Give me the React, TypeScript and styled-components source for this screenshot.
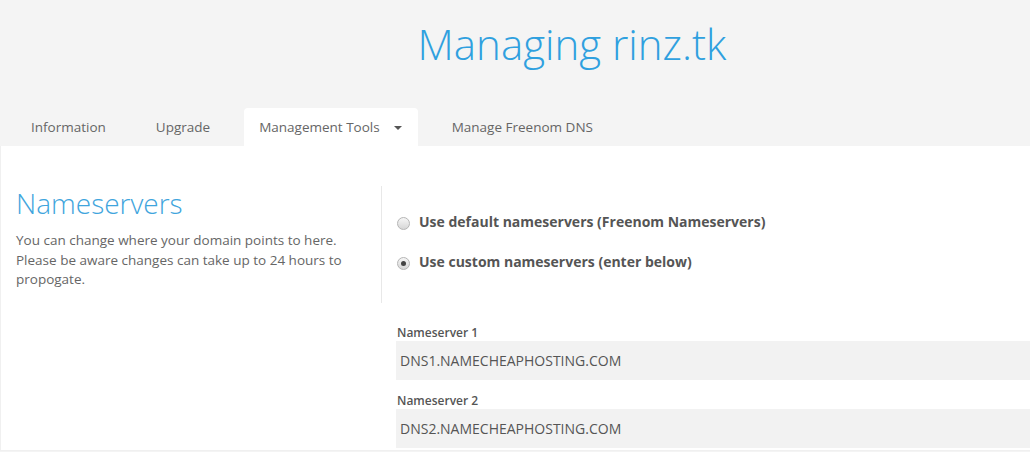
import React from "react";
import styled, { createGlobalStyle } from "styled-components";

const Global = createGlobalStyle`
  html, body { margin: 0; padding: 0; background: #f4f4f4; }
  body { font-family: "Open Sans", "Noto Sans", sans-serif; color: #666; width: 1030px; height: 452px; overflow: hidden; }
  * { box-sizing: border-box; }
`;

const Header = styled.header`
  height: 108px;
  display: flex;
  justify-content: center;
  padding-left: 114px;
`;

const Title = styled.h1`
  margin: 0;
  padding-top: 19px;
  font-weight: 300;
  font-size: 42px;
  line-height: 50px;
  color: #2fa0df;
`;

const Tabs = styled.nav`
  display: flex;
  height: 38px;
  padding-left: 15px;
  gap: 18px;
`;

const Tab = styled.div<{ $active?: boolean }>`
  display: flex;
  align-items: center;
  gap: 14px;
  height: 38px;
  font-size: 13.5px;
  color: #666;
  background: ${(p) => (p.$active ? "#fff" : "transparent")};
  border-radius: 4px 4px 0 0;
  padding: 0 16px 0 ${(p) => (p.$active ? "15px" : "16px")};
`;

const Caret = styled.span`
  width: 0;
  height: 0;
  border-left: 4px solid transparent;
  border-right: 4px solid transparent;
  border-top: 4px solid #555;
  margin-top: 2px;
`;

const Panel = styled.main`
  background: #fff;
  height: 305px;
  border-left: 1px solid #f0f0f0;
  border-bottom: 1px solid #f0f0f0;
  padding-top: 40px;
`;

const Row = styled.div`
  display: grid;
  grid-template-columns: 381px 1fr;
`;

const Left = styled.section`
  padding-left: 15px;
  border-right: 1px solid #e8e8e8;
  height: 117px;
`;

const Heading = styled.h2`
  margin: -1px 0 0;
  font-weight: 300;
  font-size: 28px;
  line-height: 36px;
  color: #3fa5dd;
`;

const Desc = styled.p`
  margin: 10px 0 0;
  font-size: 13.5px;
  line-height: 19.5px;
  color: #666;
  width: 345px;
`;

const Right = styled.section`
  padding-left: 15px;
  padding-top: 25px;
  display: flex;
  flex-direction: column;
  gap: 20px;
`;

const Option = styled.label`
  display: flex;
  align-items: center;
  gap: 9px;
  font-size: 14px;
  font-weight: 700;
  color: #555;
  height: 20px;
`;

const Radio = styled.span<{ $checked?: boolean }>`
  width: 13px;
  height: 13px;
  border-radius: 50%;
  border: 1px solid #b5b5b5;
  background: linear-gradient(#f6f6f6, #d6d6d6);
  margin-top: 5px;
  display: flex;
  align-items: center;
  justify-content: center;
  flex-shrink: 0;
  &::after {
    content: "";
    width: 5px;
    height: 5px;
    border-radius: 50%;
    background: ${(p) => (p.$checked ? "#444" : "transparent")};
  }
`;

const Fields = styled.div`
  margin-left: 395px;
  margin-top: 21px;
  display: flex;
  flex-direction: column;
  gap: 12px;
`;

const Field = styled.div`
  display: flex;
  flex-direction: column;
`;

const FieldLabel = styled.label`
  font-size: 12px;
  font-weight: 600;
  color: #555;
  line-height: 17px;
  padding-left: 1px;
`;

const Input = styled.div`
  height: 39px;
  background: #f2f2f2;
  font-size: 14px;
  color: #555;
  display: flex;
  align-items: center;
  padding-left: 4px;
`;

export default function App() {
  return (
    <>
      <Global />
      <Header>
        <Title>Managing rinz.tk</Title>
      </Header>
      <Tabs>
        <Tab>Information</Tab>
        <Tab>Upgrade</Tab>
        <Tab $active>
          Management Tools <Caret />
        </Tab>
        <Tab>Manage Freenom DNS</Tab>
      </Tabs>
      <Panel>
        <Row>
          <Left>
            <Heading>Nameservers</Heading>
            <Desc>
              You can change where your domain points to here. Please be aware changes can take up to 24 hours to
              propogate.
            </Desc>
          </Left>
          <Right>
            <Option>
              <Radio />
              Use default nameservers (Freenom Nameservers)
            </Option>
            <Option>
              <Radio $checked />
              Use custom nameservers (enter below)
            </Option>
          </Right>
        </Row>
        <Fields>
          <Field>
            <FieldLabel>Nameserver 1</FieldLabel>
            <Input>DNS1.NAMECHEAPHOSTING.COM</Input>
          </Field>
          <Field>
            <FieldLabel>Nameserver 2</FieldLabel>
            <Input>DNS2.NAMECHEAPHOSTING.COM</Input>
          </Field>
        </Fields>
      </Panel>
    </>
  );
}
